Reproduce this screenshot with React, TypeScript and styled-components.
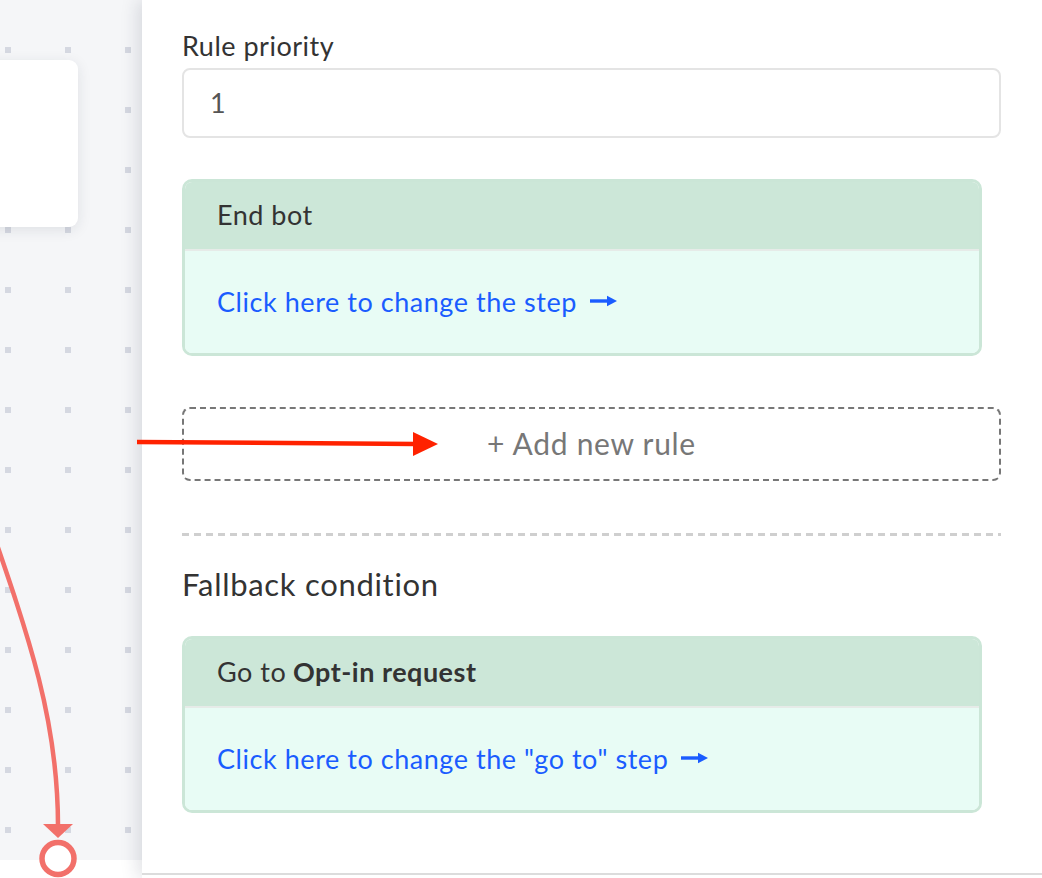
import React from "react";
import styled, { createGlobalStyle } from "styled-components";

const Global = createGlobalStyle`
  html, body { margin: 0; padding: 0; background: #fff; }
  body { font-family: Lato, "Open Sans", sans-serif; -webkit-font-smoothing: antialiased; }
  #root { width: 1042px; height: 878px; overflow: hidden; }
  * { box-sizing: border-box; }
`;

const Page = styled.div`
  position: relative;
  display: flex;
  width: 1042px;
  height: 878px;
  overflow: hidden;
  background: #fff;
`;

const Canvas = styled.div`
  position: relative;
  flex: 0 0 142px;
  display: flex;
  flex-direction: column;
`;

const Grid = styled.div`
  height: 860px;
  background-color: #f5f6f8;
  background-image: conic-gradient(
    from 90deg at 6px 6px,
    transparent 0 50%,
    #d5d8e1 50% 75%,
    transparent 75%
  );
  background-size: 60px 60px;
  background-position: 5px 47px;
`;

const NodeCard = styled.div`
  position: absolute;
  left: -30px;
  top: 60px;
  width: 108px;
  height: 167px;
  background: #fff;
  border-radius: 9px;
  box-shadow: 0 3px 14px rgba(30, 35, 60, 0.1);
`;

const Connector = styled.svg`
  position: absolute;
  left: 0;
  top: 0;
  overflow: visible;
`;

const Panel = styled.div`
  position: relative;
  z-index: 1;
  flex: 1;
  display: flex;
  flex-direction: column;
  background: #fff;
  box-shadow: -5px 0 16px rgba(30, 35, 60, 0.13);
`;

const Content = styled.div`
  flex: 0 0 873px;
  display: flex;
  flex-direction: column;
  padding: 30px 41px 0 40px;
`;

const Footer = styled.div`
  flex: 1;
  border-top: 2px solid #dcdcdc;
`;

const Label = styled.div`
  font-size: 27px;
  letter-spacing: 0.5px;
  line-height: 32px;
  color: #333;
  margin-bottom: 6px;
`;

const Input = styled.div`
  height: 70px;
  display: flex;
  align-items: center;
  padding: 0 26px 2px;
  border: 2px solid #e4e4e4;
  border-radius: 8px;
  font-size: 27px;
  color: #555;
`;

const Card = styled.div<{ $top: number }>`
  width: 800px;
  margin-top: ${(p) => p.$top}px;
  border: 3px solid #cbe6d7;
  border-radius: 10px;
  overflow: hidden;
`;

const CardHeader = styled.div`
  height: 69px;
  display: flex;
  align-items: center;
  padding: 0 32px 2px;
  background: #cce7d8;
  border-bottom: 2px solid #e6ebe8;
  font-size: 27px;
  letter-spacing: 0.5px;
  color: #333;

  b {
    font-weight: 700;
    margin-left: 0.25em;
  }
`;

const CardBody = styled.div`
  height: 102px;
  display: flex;
  align-items: center;
  padding: 0 32px 2px;
  background: #e8fcf5;
`;

const StepLink = styled.a`
  display: inline-flex;
  align-items: center;
  gap: 13px;
  font-size: 27px;
  letter-spacing: 0.55px;
  color: #1a5cff;
  text-decoration: none;
  cursor: pointer;
`;

const AddRule = styled.div`
  margin-top: 51px;
  height: 74px;
  display: flex;
  align-items: center;
  justify-content: center;
  padding-bottom: 2px;
  border: 2px dashed #777;
  border-radius: 8px;
  font-size: 30px;
  letter-spacing: 0.7px;
  color: #777;
`;

const Divider = styled.div`
  margin-top: 52px;
  height: 3px;
  background: repeating-linear-gradient(to right, #cfcfcf 0 7px, transparent 7px 12px);
`;

const Heading = styled.div`
  margin-top: 30px;
  font-size: 31px;
  letter-spacing: 0.7px;
  line-height: 36px;
  color: #333;
`;

const Annotation = styled.svg`
  position: absolute;
  left: 0;
  top: 0;
  pointer-events: none;
  z-index: 5;
`;

const Arrow = () => (
  <svg width="27" height="12" viewBox="0 0 27 12">
    <rect x="0" y="4.3" width="19" height="3.4" fill="#1a5cff" />
    <polygon points="17,0.8 27,6 17,11.2" fill="#1a5cff" />
  </svg>
);

export default function App() {
  return (
    <Page>
      <Global />
      <Canvas>
        <Grid />
        <NodeCard />
        <Connector width="142" height="878" viewBox="0 0 142 878">
          <path
            d="M -15 510 C 30 640, 58 720, 58 826"
            fill="none"
            stroke="#f2706a"
            strokeWidth="4.5"
          />
          <polygon points="43,824 73,824 58,838" fill="#f2706a" />
          <circle cx="58" cy="858.5" r="16" fill="#fff" stroke="#f2706a" strokeWidth="5.5" />
        </Connector>
      </Canvas>
      <Panel>
        <Content>
          <Label>Rule priority</Label>
          <Input>1</Input>
          <Card $top={41}>
            <CardHeader>End bot</CardHeader>
            <CardBody>
              <StepLink>
                Click here to change the step <Arrow />
              </StepLink>
            </CardBody>
          </Card>
          <AddRule>+ Add new rule</AddRule>
          <Divider />
          <Heading>Fallback condition</Heading>
          <Card $top={34}>
            <CardHeader>
              Go to <b>Opt-in request</b>
            </CardHeader>
            <CardBody>
              <StepLink>
                Click here to change the "go to" step <Arrow />
              </StepLink>
            </CardBody>
          </Card>
        </Content>
        <Footer />
      </Panel>
      <Annotation width="1042" height="878" viewBox="0 0 1042 878">
        <line x1="137" y1="442" x2="416" y2="444" stroke="#ff2200" strokeWidth="4.5" />
        <polygon points="413,432 438,444 413,456" fill="#ff2200" />
      </Annotation>
    </Page>
  );
}
